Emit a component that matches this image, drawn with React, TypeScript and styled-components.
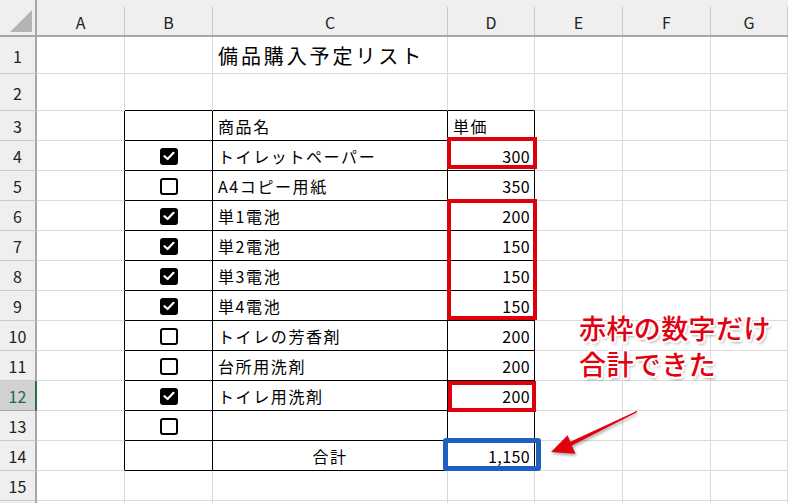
import React from "react";
import styled, { createGlobalStyle, css } from "styled-components";

const Global = createGlobalStyle`
  html, body { margin: 0; padding: 0; background: #ffffff; overflow: hidden; }
  body { font-family: "Noto Sans CJK JP", "Noto Sans", sans-serif; color: #000; }
`;

const COLS = ["A", "B", "C", "D", "E", "F", "G"];
const GRID = "#dadada";
const BLACK = "#000000";

const Sheet = styled.div`
  position: relative;
  width: 788px;
  height: 503px;
  overflow: hidden;
  display: grid;
  grid-template-columns: 37px 88px 88px 235px 87px 88px 88px 1fr;
  grid-template-rows: 37px 37px 37px repeat(14, 30px);
`;

const Corner = styled.div`
  grid-row: 1;
  grid-column: 1;
  background: #efefef;
  border-right: 2px solid #a6a6a6;
  border-bottom: 2px solid #a6a6a6;
  box-sizing: border-box;
  display: flex;
  align-items: flex-end;
  justify-content: flex-end;
  padding: 0 2px 2px 0;
`;

const ColHead = styled.div<{ $gc: number }>`
  grid-row: 1;
  grid-column: ${(p) => p.$gc};
  background: #efefef;
  border-bottom: 2px solid #a6a6a6;
  box-sizing: border-box;
  padding-top: 7px;
  display: flex;
`;

const ColHeadInner = styled.div`
  flex: 1;
  border-right: 1px solid #c9c9c9;
  display: flex;
  align-items: center;
  justify-content: center;
  font-size: 16px;
  color: #222;
  padding-top: 1px;
`;

const RowHead = styled.div<{ $gr: number; $sel?: boolean }>`
  grid-row: ${(p) => p.$gr};
  grid-column: 1;
  background: ${(p) => (p.$sel ? "#d2d2d2" : "#efefef")};
  border-right: 2px solid ${(p) => (p.$sel ? "#217346" : "#a6a6a6")};
  border-bottom: 1px solid ${(p) => (p.$sel ? "#a6a6a6" : "#c9c9c9")};
  box-sizing: border-box;
  display: flex;
  align-items: center;
  justify-content: center;
  font-size: 16px;
  color: ${(p) => (p.$sel ? "#1c6b40" : "#222")};
  padding-top: 1px;
`;

const Cell = styled.div<{
  $gr: number;
  $gc: number;
  $rb: string;
  $bb: string;
  $align: "left" | "right" | "center";
}>`
  grid-row: ${(p) => p.$gr};
  grid-column: ${(p) => p.$gc};
  box-sizing: border-box;
  border-right: 1px solid ${(p) => p.$rb};
  border-bottom: 1px solid ${(p) => p.$bb};
  display: flex;
  align-items: center;
  padding: 1px 4px 0 5px;
  font-size: 16px;
  letter-spacing: 1.6px;
  white-space: nowrap;
  overflow: visible;
  ${(p) =>
    p.$align === "right" &&
    css`
      justify-content: flex-end;
      letter-spacing: 0.4px;
    `}
  ${(p) =>
    p.$align === "center" &&
    css`
      justify-content: center;
      padding-left: 0;
      padding-right: 0;
    `}
`;

const Title = styled.span`
  font-size: 20px;
  letter-spacing: 2.9px;
  margin-top: -1px;
`;

const Box = styled.div<{ $checked: boolean }>`
  width: 18px;
  height: 17px;
  box-sizing: border-box;
  border-radius: 3px;
  margin-left: 1px;
  display: flex;
  align-items: center;
  justify-content: center;
  ${(p) =>
    p.$checked
      ? css`
          background: #000;
        `
      : css`
          background: #fff;
          border: 2px solid #000;
        `}
`;

const CheckBox = ({ checked }: { checked: boolean }) => (
  <Box $checked={checked}>
    {checked && (
      <svg width="12" height="10" viewBox="0 0 12 10">
        <polyline points="1.5,5.2 4.6,8 10.5,1.8" fill="none" stroke="#fff" strokeWidth="2.2" strokeLinecap="round" strokeLinejoin="round" />
      </svg>
    )}
  </Box>
);

/* Highlight frames share the grid area of the cells they mark and spill a few
   pixels past them through negative margins. */
const Frame = styled.div<{ $row: number; $span: number; $m: string; $blue?: boolean }>`
  grid-column: 5;
  grid-row: ${(p) => p.$row + 1} / span ${(p) => p.$span};
  margin: ${(p) => p.$m};
  z-index: 2;
  box-sizing: border-box;
  border: ${(p) => (p.$blue ? "5px solid #1f5fbe" : "4px solid #e0000b")};
  border-radius: ${(p) => (p.$blue ? "3px" : "0")};
  pointer-events: none;
`;

const Note = styled.div`
  position: absolute;
  left: 579px;
  top: 310px;
  z-index: 3;
  font-size: 27px;
  line-height: 36px;
  font-weight: 500;
  color: #e3000f;
  letter-spacing: 0.4px;
  text-shadow:
    -1.5px -1.5px 0 #fff, 1.5px -1.5px 0 #fff, -1.5px 1.5px 0 #fff, 1.5px 1.5px 0 #fff,
    0 -2px 0 #fff, 0 2px 0 #fff, -2px 0 0 #fff, 2px 0 0 #fff,
    2px 3px 3px rgba(0, 0, 0, 0.35);
`;

const Arrow = styled.svg`
  position: absolute;
  left: 540px;
  top: 400px;
  z-index: 3;
  filter: drop-shadow(1px 2px 1.5px rgba(0, 0, 0, 0.35));
`;

type Row = {
  n: number;
  check?: boolean;
  name?: string;
  price?: string;
  nameAlign?: "left" | "center";
};

const rows: Row[] = [
  { n: 1 },
  { n: 2 },
  { n: 3, name: "商品名", price: "単価" },
  { n: 4, check: true, name: "トイレットペーパー", price: "300" },
  { n: 5, check: false, name: "A4コピー用紙", price: "350" },
  { n: 6, check: true, name: "単1電池", price: "200" },
  { n: 7, check: true, name: "単2電池", price: "150" },
  { n: 8, check: true, name: "単3電池", price: "150" },
  { n: 9, check: true, name: "単4電池", price: "150" },
  { n: 10, check: false, name: "トイレの芳香剤", price: "200" },
  { n: 11, check: false, name: "台所用洗剤", price: "200" },
  { n: 12, check: true, name: "トイレ用洗剤", price: "200" },
  { n: 13, check: false },
  { n: 14, name: "合計", price: "1,150", nameAlign: "center" },
  { n: 15 },
  { n: 16 },
];

const frames = [
  { row: 4, span: 1, m: "-4px -2px 2px -1px" },
  { row: 6, span: 4, m: "-2px -2px 1px -1px" },
  { row: 12, span: 1, m: "0 -1px -1px 0" },
];

const inTable = (r: number) => r >= 3 && r <= 14;

export default function App() {
  return (
    <>
      <Global />
      <Sheet>
        <Corner>
          <svg width="23" height="23" viewBox="0 0 23 23">
            <polygon points="0,22 22,22 22,0" fill="#b4b4b4" />
          </svg>
        </Corner>
        {COLS.map((c, i) => (
          <ColHead key={c} $gc={i + 2}>
            <ColHeadInner>{c}</ColHeadInner>
          </ColHead>
        ))}
        {rows.map((row) => {
          const r = row.n;
          return (
            <React.Fragment key={r}>
              <RowHead $gr={r + 1} $sel={r === 12}>
                {r <= 15 ? r : ""}
              </RowHead>
              {COLS.map((c, i) => {
                const tableCol = c === "B" || c === "C" || c === "D";
                let rb = GRID;
                let bb = GRID;
                if (inTable(r) && (tableCol || c === "A")) rb = BLACK;
                if ((inTable(r) || r === 2) && tableCol) bb = BLACK;
                let content: React.ReactNode = null;
                let align: "left" | "right" | "center" = "left";
                if (c === "B" && row.check !== undefined) {
                  content = <CheckBox checked={row.check} />;
                  align = "center";
                }
                if (c === "C") {
                  if (r === 1) content = <Title>備品購入予定リスト</Title>;
                  else if (row.name) content = row.name;
                  if (row.nameAlign === "center") align = "center";
                }
                if (c === "D" && row.price) {
                  content = row.price;
                  align = r === 3 ? "left" : "right";
                }
                return (
                  <Cell key={c} $gr={r + 1} $gc={i + 2} $rb={rb} $bb={bb} $align={align}>
                    {content}
                  </Cell>
                );
              })}
            </React.Fragment>
          );
        })}

        {frames.map((f) => (
          <Frame key={f.row} $row={f.row} $span={f.span} $m={f.m} />
        ))}
        <Frame $row={14} $span={1} $m="-3px -6px 0 -5px" $blue />

        <Note>
          赤枠の数字だけ
          <br />
          合計できた
        </Note>

        <Arrow width="110" height="70" viewBox="0 0 110 70">
          <polygon
            points="97.4,11.4 96.6,12.6 31.8,45.6 35.5,53.8 11,52 27.6,35.3 30.3,41.8 96.8,11.0"
            fill="#e3000f"
          />
        </Arrow>
      </Sheet>
    </>
  );
}
